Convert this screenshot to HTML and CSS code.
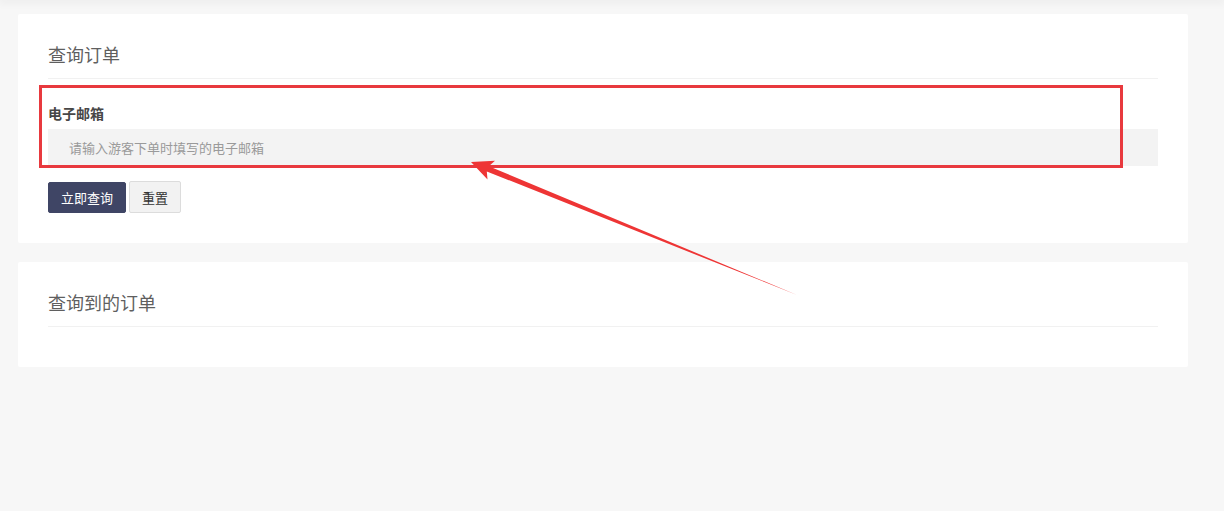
FILE: index.html
```html
<!DOCTYPE html>
<html lang="zh-CN">
<head>
<meta charset="utf-8">
<title>查询订单</title>
<link rel="stylesheet" href="styles.css">
</head>
<body>
<div class="top-shade"></div>
<main class="page">
  <section class="card">
    <div class="card-header">查询订单</div>
    <form class="card-body form">
      <label class="form-label" for="email">电子邮箱</label>
      <input class="form-input" id="email" type="text" placeholder="请输入游客下单时填写的电子邮箱">
      <div class="form-actions">
        <button type="button" class="btn btn-primary">立即查询</button>
        <button type="reset" class="btn btn-default">重置</button>
      </div>
    </form>
  </section>
  <section class="card card-result">
    <div class="card-header">查询到的订单</div>
    <div class="card-body result-body"></div>
  </section>
</main>
<div class="annot-box"></div>
<svg class="annot-arrow" width="1224" height="511" viewBox="0 0 1224 511" xmlns="http://www.w3.org/2000/svg">
  <polygon points="471,162 495,160.8 488.8,166.2 797,295 486.8,171.4 487.5,179.5" fill="#ee3535"/>
</svg>
</body>
</html>
```

FILE: styles.css
```css
* { box-sizing: border-box; }
html, body { margin: 0; padding: 0; }
body {
  background: #f7f7f7;
  font-family: "Noto Sans CJK SC", "Liberation Sans", sans-serif;
  color: #555;
  width: 1224px;
  height: 511px;
  overflow: hidden;
  position: relative;
}
.top-shade {
  height: 0;
  box-shadow: 0 0 8px 2px rgba(0,0,0,0.08);
}
.page {
  width: 1170px;
  margin-left: 18px;
  padding-top: 14px;
  display: flex;
  flex-direction: column;
  gap: 19px;
}
.card {
  background: #fff;
  border-radius: 2px;
  padding: 0 30px;
}
.card-header {
  padding-top: 28px;
  padding-bottom: 12px;
  line-height: 24px;
  font-size: 18px;
  color: #5f5f5f;
  border-bottom: 1px solid #f1f1f1;
}
.form {
  display: flex;
  flex-direction: column;
  padding-top: 24px;
  padding-bottom: 30px;
}
.form-label {
  font-size: 14px;
  font-weight: bold;
  line-height: 20px;
  color: #474747;
}
.form-input {
  margin-top: 6px;
  height: 37px;
  border: none;
  background: #f3f3f3;
  padding: 0 21px;
  font-family: inherit;
  font-size: 13px;
  color: #333;
  outline: none;
}
.form-input::placeholder { color: #9a9a9a; }
.form-actions {
  margin-top: 16px;
  display: flex;
  gap: 3px;
  align-items: flex-start;
}
.btn {
  font-family: inherit;
  font-size: 13px;
  height: 31px;
  line-height: 29px;
  padding: 0;
  border-radius: 2px;
  cursor: pointer;
}
.btn-primary {
  background: #3f4565;
  color: #fff;
  border: 1px solid #3f4565;
  width: 78px;
}
.btn-default {
  background: #f2f2f2;
  color: #333;
  border: 1px solid #dcdcdc;
  width: 52px;
  height: 32px;
  margin-top: -1px;
}
.result-body { height: 40px; }
.annot-box {
  position: absolute;
  left: 39px;
  top: 85px;
  width: 1084px;
  height: 83px;
  border: 3px solid #e8393e;
  pointer-events: none;
}
.annot-arrow {
  position: absolute;
  left: 0;
  top: 0;
  pointer-events: none;
}
```
